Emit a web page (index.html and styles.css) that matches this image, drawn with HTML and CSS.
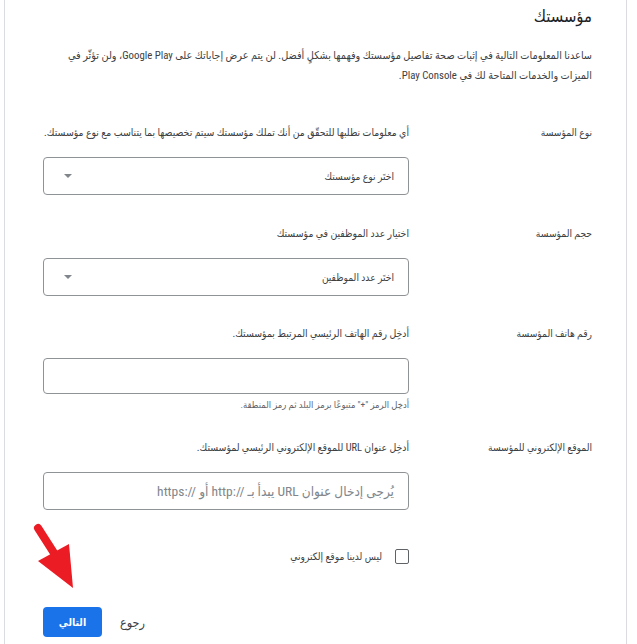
FILE: index.html
```html
<!DOCTYPE html>
<html lang="ar" dir="rtl">
<head>
<meta charset="utf-8">
<title>مؤسستك</title>
<link rel="stylesheet" href="styles.css">
</head>
<body>
<div class="card">
  <h1 class="title">مؤسستك</h1>
  <p class="intro">ساعدنا المعلومات التالية في إثبات صحة تفاصيل مؤسستك وفهمها بشكلٍ أفضل. لن يتم عرض إجاباتك على Google Play، ولن تؤثّر في الميزات والخدمات المتاحة لك في Play Console.</p>

  <div class="row row-first">
    <div class="label">نوع المؤسسة</div>
    <div class="field">
      <div class="desc">أي معلومات نطلبها للتحقّق من أنك تملك مؤسستك سيتم تخصيصها بما يتناسب مع نوع مؤسستك.</div>
      <div class="box select"><span>اختَر نوع مؤسستك</span><span class="caret"></span></div>
    </div>
  </div>

  <div class="row">
    <div class="label">حجم المؤسسة</div>
    <div class="field">
      <div class="desc">اختيار عدد الموظفين في مؤسستك</div>
      <div class="box select"><span>اختَر عدد الموظفين</span><span class="caret"></span></div>
    </div>
  </div>

  <div class="row row-phone">
    <div class="label">رقم هاتف المؤسسة</div>
    <div class="field">
      <div class="desc">أدخِل رقم الهاتف الرئيسي المرتبط بمؤسستك.</div>
      <div class="box input input-phone"></div>
      <div class="hint">أدخِل الرمز "+" متبوعًا برمز البلد ثم رمز المنطقة.</div>
    </div>
  </div>

  <div class="row row-url">
    <div class="label">الموقع الإلكتروني للمؤسسة</div>
    <div class="field">
      <div class="desc">أدخِل عنوان URL للموقع الإلكتروني الرئيسي لمؤسستك.</div>
      <div class="box input"><span class="placeholder">يُرجى إدخال عنوان URL يبدأ بـ <bdi dir="ltr">http://</bdi> أو <bdi dir="ltr">https://</bdi></span></div>
    </div>
  </div>

  <div class="row row-check">
    <div class="label"></div>
    <div class="field">
      <label class="check"><span class="checkbox"></span><span>ليس لدينا موقع إلكتروني</span></label>
    </div>
  </div>

  <div class="actions">
    <span class="back">رجوع</span>
    <span class="next">التالي</span>
  </div>

  <svg class="arrow" width="60" height="80" viewBox="0 0 60 80">
    <line x1="18" y1="13" x2="34" y2="38" stroke="#ec1c24" stroke-width="8" stroke-linecap="round"/>
    <polygon points="18,46 49,29 53,73" fill="#ec1c24"/>
  </svg>
</div>
</body>
</html>
```

FILE: styles.css
```css
html, body {
  margin: 0;
  padding: 0;
  background: #ffffff;
}

body {
  font-family: "Roboto", "DejaVu Sans", sans-serif;
  font-stretch: condensed;
  color: #3c4043;
}

.card {
  position: relative;
  margin: 0 10px 0 4px;
  width: 623px;
  box-sizing: border-box;
  min-height: 644px;
  border-left: 1px solid #dadce0;
  border-right: 1px solid #dadce0;
  padding: 5px 34px 0 38px;
}

.title {
  margin: 0;
  font-size: 16.5px;
  line-height: 24px;
  font-weight: normal;
  color: #202124;
}

.intro {
  margin: 17px 0 0;
  font-size: 10.8px;
  line-height: 20px;
  color: #3c4043;
}

.row {
  display: grid;
  grid-template-columns: 1fr 366px;
  margin-top: 31px;
}

.row-first {
  margin-top: 39px;
}

.row-phone {
  margin-top: 30px;
}

.row-url {
  margin-top: 27px;
}

.row-check {
  margin-top: 39px;
}

.label {
  font-size: 10.2px;
  line-height: 16px;
  color: #3c4043;
}

.desc {
  font-size: 10.4px;
  line-height: 16px;
  color: #3c4043;
}

.box {
  box-sizing: border-box;
  height: 38px;
  margin-top: 16px;
  border: 1px solid #8f9396;
  border-radius: 4px;
  display: flex;
  align-items: center;
  padding: 0 14px 0 20px;
}

.input-phone {
  height: 36px;
}

.select {
  justify-content: space-between;
  font-size: 10.2px;
  color: #3c4043;
}

.caret {
  width: 0;
  height: 0;
  border-left: 4px solid transparent;
  border-right: 4px solid transparent;
  border-top: 4px solid #80868b;
}

.placeholder {
  font-size: 13.5px;
  color: #80868b;
}

.hint {
  margin-top: 3px;
  font-size: 9.4px;
  line-height: 16px;
  color: #5f6368;
}

.check {
  display: flex;
  align-items: center;
  gap: 13px;
  font-size: 10.2px;
  line-height: 15px;
  color: #3c4043;
}

.checkbox {
  box-sizing: border-box;
  width: 14px;
  height: 15px;
  border: 1.5px solid #5f6368;
  border-radius: 2px;
}

.actions {
  display: flex;
  justify-content: flex-end;
  align-items: center;
  gap: 18px;
  margin-top: 43px;
}

.back {
  font-size: 12.5px;
  color: #3c4043;
}

.next {
  box-sizing: border-box;
  width: 59px;
  height: 30px;
  border-radius: 4px;
  background: #1a73e8;
  color: #ffffff;
  font-size: 10.5px;
  font-weight: bold;
  display: flex;
  align-items: center;
  justify-content: center;
}

.arrow {
  position: absolute;
  left: 15px;
  top: 515px;
}
```
